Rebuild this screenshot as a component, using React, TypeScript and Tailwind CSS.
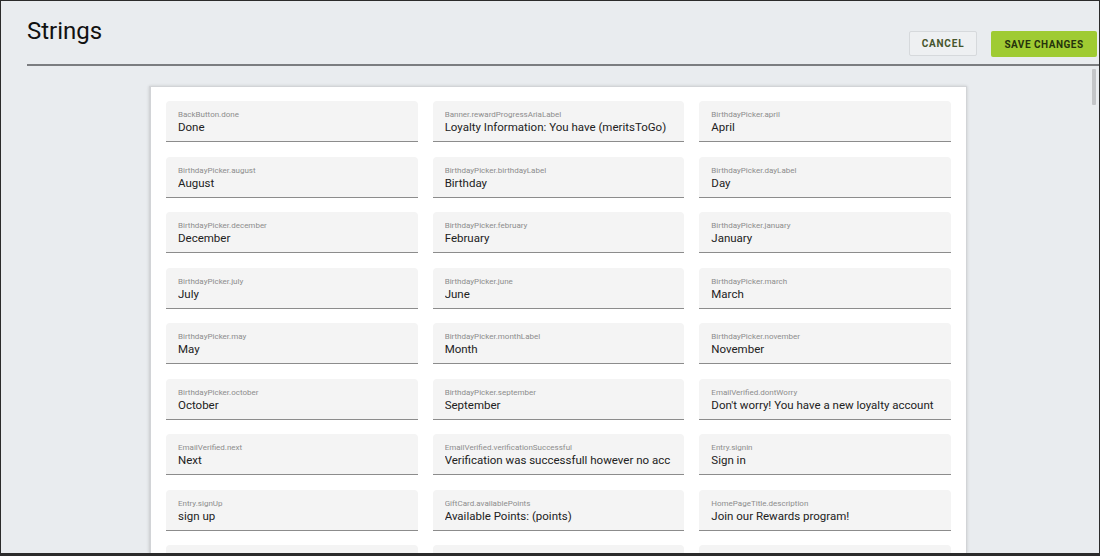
import React from 'react';

const strings = [
  ['BackButton.done', 'Done'],
  ['Banner.rewardProgressAriaLabel', 'Loyalty Information: You have (meritsToGo)'],
  ['BirthdayPicker.april', 'April'],
  ['BirthdayPicker.august', 'August'],
  ['BirthdayPicker.birthdayLabel', 'Birthday'],
  ['BirthdayPicker.dayLabel', 'Day'],
  ['BirthdayPicker.december', 'December'],
  ['BirthdayPicker.february', 'February'],
  ['BirthdayPicker.january', 'January'],
  ['BirthdayPicker.july', 'July'],
  ['BirthdayPicker.june', 'June'],
  ['BirthdayPicker.march', 'March'],
  ['BirthdayPicker.may', 'May'],
  ['BirthdayPicker.monthLabel', 'Month'],
  ['BirthdayPicker.november', 'November'],
  ['BirthdayPicker.october', 'October'],
  ['BirthdayPicker.september', 'September'],
  ['EmailVerified.dontWorry', "Don't worry! You have a new loyalty account"],
  ['EmailVerified.next', 'Next'],
  ['EmailVerified.verificationSuccessful', 'Verification was successfull however no acc'],
  ['Entry.signin', 'Sign in'],
  ['Entry.signUp', 'sign up'],
  ['GiftCard.availablePoints', 'Available Points: (points)'],
  ['HomePageTitle.description', 'Join our Rewards program!'],
  ['HomePageTitle.heading', 'Welcome'],
  ['HomePageTitle.subheading', 'Rewards'],
  ['Login.email', 'Email'],
];

function StringField({ label, value }: { label: string; value: string }) {
  return (
    <div className="h-[41px] bg-[#f4f4f4] rounded-t-[4px] border-b border-[#8c8c8c] pl-[12px] pr-[8px] pt-[8px] overflow-hidden">
      <div className="text-[8px] leading-[11px] text-[#8d8d8d] whitespace-nowrap overflow-hidden">{label}</div>
      <div className="text-[11.5px] leading-[15px] text-[#222] whitespace-nowrap overflow-hidden">{value}</div>
    </div>
  );
}

export default function App() {
  return (
    <div
      className="w-[1100px] h-[556px] overflow-hidden bg-[#e9ecef] border border-[#2b2b2b] border-b-[3px] flex flex-col"
      style={{ fontFamily: 'Roboto, "Liberation Sans", sans-serif' }}
    >
      {/* Header */}
      <div className="flex justify-between pl-[26px] pr-[2px] h-[63px]">
        <h1 className="text-[24px] leading-[28px] text-[#111] mt-[16px]">Strings</h1>
        <div className="flex gap-[14px] mt-[30px] h-[26px]">
          <button className="w-[68px] h-[25px] bg-[#eef0f2] border border-[#d6d9dc] rounded-[2px] text-[10px] font-bold tracking-[0.8px] text-[#46552c]">
            CANCEL
          </button>
          <button className="w-[106px] h-[26px] bg-[#9fcb32] rounded-[2px] text-[10px] font-bold tracking-[0.5px] text-[#26330c]">
            SAVE CHANGES
          </button>
        </div>
      </div>
      <div className="ml-[26px] h-[2px] bg-[#7b7d80]" />

      {/* Body */}
      <div className="flex flex-1 min-h-0">
        <div className="flex-1 pt-[20px] pl-[148px]">
          <div className="w-[818px] h-full bg-white border-l-2 border-t border-r border-[#d2d4d7] shadow-[0_0_3px_rgba(0,0,0,0.15)] px-[15px] pt-[14px]">
            <div className="grid grid-cols-3 gap-x-[15px] gap-y-[14.5px]">
              {strings.map(([label, value]) => (
                <StringField key={label} label={label} value={value} />
              ))}
            </div>
          </div>
        </div>
        <div className="w-[10px] flex justify-center pt-[3px]">
          <div className="w-[4px] h-[36px] bg-[#c3c5c8] rounded-[1px]" />
        </div>
      </div>
    </div>
  );
}
